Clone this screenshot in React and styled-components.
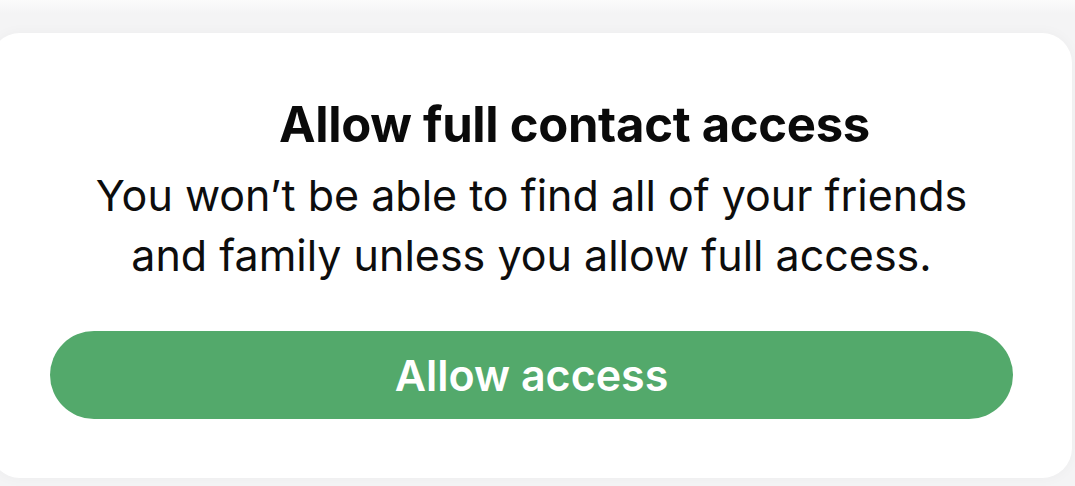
import React from 'react'
import styled, { createGlobalStyle } from 'styled-components'

const Global = createGlobalStyle`
  html, body {
    margin: 0;
    padding: 0;
    background: #f5f5f6;
    overflow: hidden;
  }
  body {
    font-family: Inter, 'Noto Sans', sans-serif;
    -webkit-font-smoothing: antialiased;
  }
`

const Screen = styled.div`
  width: 1075px;
  height: 486px;
  padding-top: 33px;
  box-sizing: border-box;
  background: linear-gradient(#fbfbfb 0, #f4f4f5 14px, #f4f4f5 100%);
`

const Card = styled.section`
  margin-left: -10px;
  width: 1082px;
  height: 445px;
  box-sizing: border-box;
  background: #ffffff;
  border-radius: 30px;
  box-shadow: 0 0 14px rgba(0, 0, 0, 0.035);
  padding: 0 59px 0 60px;
  display: flex;
  flex-direction: column;
  align-items: center;
`

const Title = styled.h2`
  margin: 64px 0 0 0;
  padding-left: 86px;
  font-size: 49px;
  font-weight: 700;
  letter-spacing: -0.3px;
  line-height: 56px;
  color: #0a0a0a;
`

const Body = styled.p`
  margin: 12px 0 0 0;
  font-size: 43px;
  font-weight: 400;
  line-height: 60px;
  color: #0d0d0d;
  text-align: center;
`

const Button = styled.button`
  margin-top: 46px;
  width: 100%;
  height: 88px;
  flex-shrink: 0;
  border: none;
  border-radius: 44px;
  background: #53a96b;
  color: #ffffff;
  font-family: inherit;
  font-size: 43px;
  font-weight: 600;
  cursor: pointer;
`

export default function App() {
  return (
    <Screen>
      <Global />
      <Card>
        <Title>Allow full contact access</Title>
        <Body>
          You won’t be able to find all of your friends
          <br />
          and family unless you allow full access.
        </Body>
        <Button>Allow access</Button>
      </Card>
    </Screen>
  )
}
